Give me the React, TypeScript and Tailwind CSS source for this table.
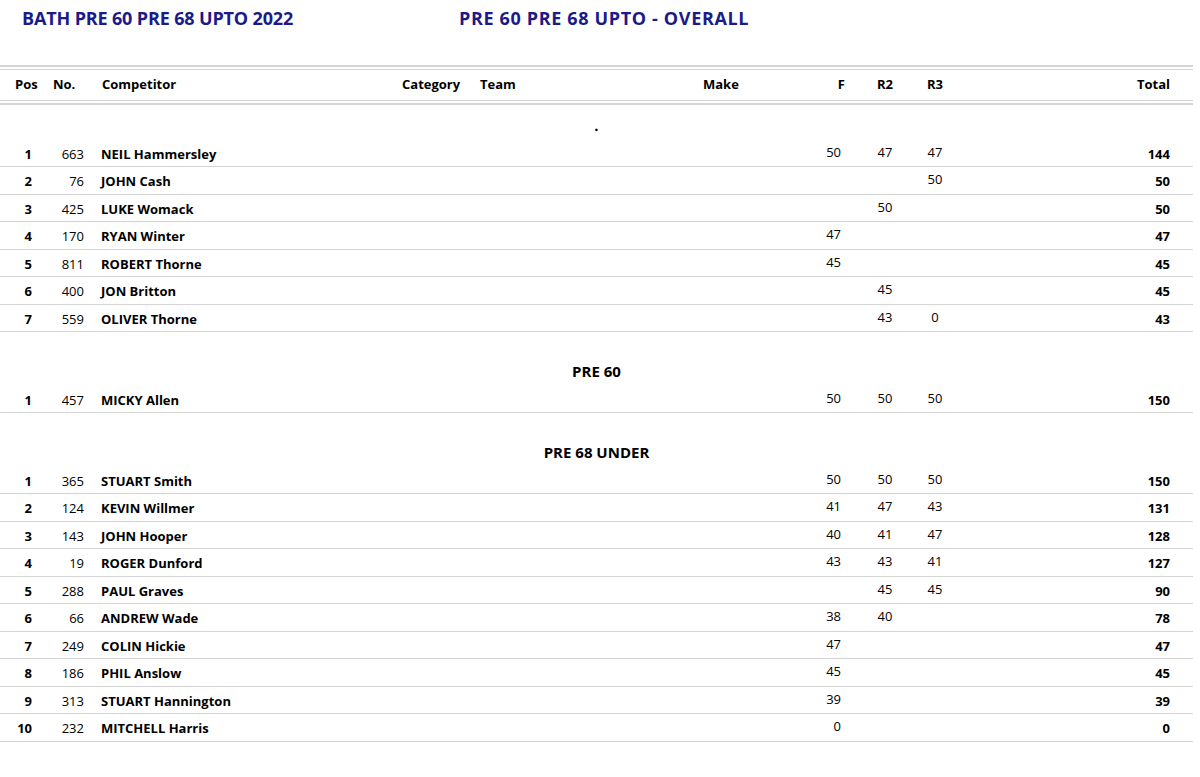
import React from 'react';

type Row = { pos: number; no: number; name: string; f?: string; r2?: string; r3?: string; total: string };

const sections: { title: string; rows: Row[] }[] = [
  {
    title: '.',
    rows: [
      { pos: 1, no: 663, name: 'NEIL Hammersley', f: '50', r2: '47', r3: '47', total: '144' },
      { pos: 2, no: 76, name: 'JOHN Cash', r3: '50', total: '50' },
      { pos: 3, no: 425, name: 'LUKE Womack', r2: '50', total: '50' },
      { pos: 4, no: 170, name: 'RYAN Winter', f: '47', total: '47' },
      { pos: 5, no: 811, name: 'ROBERT Thorne', f: '45', total: '45' },
      { pos: 6, no: 400, name: 'JON Britton', r2: '45', total: '45' },
      { pos: 7, no: 559, name: 'OLIVER Thorne', r2: '43', r3: '0', total: '43' },
    ],
  },
  {
    title: 'PRE 60',
    rows: [{ pos: 1, no: 457, name: 'MICKY Allen', f: '50', r2: '50', r3: '50', total: '150' }],
  },
  {
    title: 'PRE 68 UNDER',
    rows: [
      { pos: 1, no: 365, name: 'STUART Smith', f: '50', r2: '50', r3: '50', total: '150' },
      { pos: 2, no: 124, name: 'KEVIN Willmer', f: '41', r2: '47', r3: '43', total: '131' },
      { pos: 3, no: 143, name: 'JOHN Hooper', f: '40', r2: '41', r3: '47', total: '128' },
      { pos: 4, no: 19, name: 'ROGER Dunford', f: '43', r2: '43', r3: '41', total: '127' },
      { pos: 5, no: 288, name: 'PAUL Graves', r2: '45', r3: '45', total: '90' },
      { pos: 6, no: 66, name: 'ANDREW Wade', f: '38', r2: '40', total: '78' },
      { pos: 7, no: 249, name: 'COLIN Hickie', f: '47', total: '47' },
      { pos: 8, no: 186, name: 'PHIL Anslow', f: '45', total: '45' },
      { pos: 9, no: 313, name: 'STUART Hannington', f: '39', total: '39' },
      { pos: 10, no: 232, name: 'MITCHELL Harris', f: '0', total: '0' },
    ],
  },
];

function ResultRow({ r }: { r: Row }) {
  return (
    <div className="flex h-[27.5px] border-b border-[#d4d4d4] text-[13px] leading-[17px] text-black">
      <div className="w-[32px] pt-[6px] text-right font-bold">{r.pos}</div>
      <div className="w-[52px] pt-[6px] text-right">{r.no}</div>
      <div className="w-[318px] pl-[17px] pt-[6px] font-bold">{r.name}</div>
      <div className="w-[78px]" />
      <div className="w-[223px]" />
      <div className="w-[97px]" />
      <div className="w-[41px] pt-[4px] text-right">{r.f}</div>
      <div className="w-[19px]" />
      <div className="w-[50px] pt-[4px] text-center">{r.r2}</div>
      <div className="w-[50px] pt-[4px] text-center">{r.r3}</div>
      <div className="flex-1 pt-[6px] pr-[23px] text-right font-bold">{r.total}</div>
    </div>
  );
}

export default function App() {
  return (
    <div className="w-[1200px] h-[777px] bg-white font-['Open_Sans',sans-serif] overflow-hidden">
      <div className="flex h-[36px] items-center pt-[1px] text-[18px] font-bold text-[#1a1a8a]">
        <div className="w-[459px] pl-[22px] tracking-[-0.15px]">BATH PRE 60 PRE 68 UPTO 2022</div>
        <div className="tracking-[0.65px]">PRE 60 PRE 68 UPTO - OVERALL</div>
      </div>

      <div className="w-[1193px] mt-[29px]">
        <div className="h-[2px] bg-[#d4d4d4]" />
        <div className="h-[2px]" />
        <div className="h-[1px] bg-[#d4d4d4]" />
        <div className="flex h-[30px] items-center text-[13px] font-bold text-black">
          <div className="w-[53px] pl-[15px]">Pos</div>
          <div className="w-[49px]">No.</div>
          <div className="w-[300px]">Competitor</div>
          <div className="w-[78px]">Category</div>
          <div className="w-[223px]">Team</div>
          <div className="w-[97px]">Make</div>
          <div className="w-[45px] text-right">F</div>
          <div className="w-[15px]" />
          <div className="w-[50px] text-center">R2</div>
          <div className="w-[50px] text-center">R3</div>
          <div className="flex-1 pr-[23px] text-right">Total</div>
        </div>
        <div className="h-[1px] bg-[#d4d4d4]" />
        <div className="h-[2px]" />
        <div className="h-[2px] bg-[#d4d4d4]" />

        {sections.map((s, i) => (
          <div key={s.title} className={i > 0 ? 'mt-[19px]' : ''}>
            <div className="h-[34.5px] pt-[12px] text-center text-[15px] leading-[17px] font-bold text-black">
              {s.title}
            </div>
            {s.rows.map((r) => (
              <ResultRow key={r.no} r={r} />
            ))}
          </div>
        ))}
      </div>
    </div>
  );
}
